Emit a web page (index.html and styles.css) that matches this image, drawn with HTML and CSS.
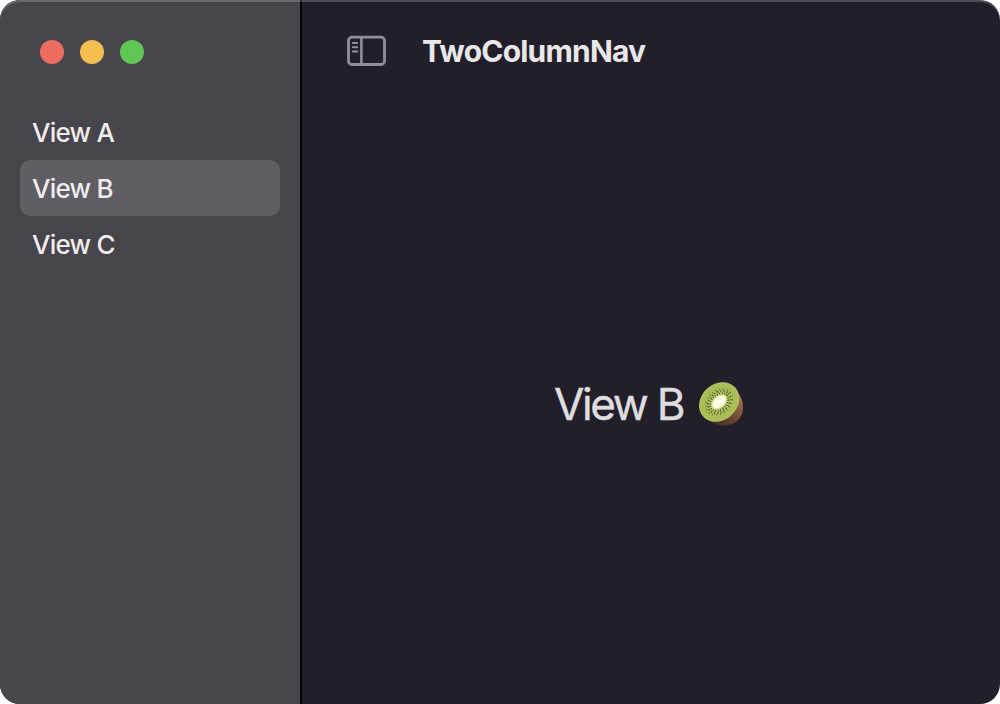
FILE: index.html
```html
<!DOCTYPE html>
<html lang="en">
<head>
<meta charset="utf-8">
<title>TwoColumnNav</title>
<link rel="stylesheet" href="styles.css">
</head>
<body>
<div class="window">
  <aside class="sidebar">
    <div class="controls">
      <span class="dot close"></span>
      <span class="dot minimize"></span>
      <span class="dot zoom"></span>
    </div>
    <nav class="list">
      <div class="item"><span>View A</span></div>
      <div class="item selected"><span>View B</span></div>
      <div class="item"><span>View C</span></div>
    </nav>
  </aside>
  <main class="detail">
    <header class="toolbar">
      <svg class="toggle" viewBox="0 0 40 32" fill="none" stroke="#928f97">
        <rect x="4.3" y="2.3" width="36" height="27.4" rx="3.6" stroke-width="2.8" transform="translate(-1.8 -.2)"/>
        <path d="M15.4 2.5V29.5" stroke-width="2.6"/>
        <path d="M6.8 8h4.4M6.8 12.2h4.4M6.8 16.4h4.4" stroke-width="2" stroke-linecap="round"/>
      </svg>
      <h1 class="title">TwoColumnNav</h1>
    </header>
    <div class="content">
      <span class="label">View B</span>
      <svg class="kiwi" viewBox="27 31 132 132">
        <defs>
          <linearGradient id="skin" x1="0.9" y1="0.2" x2="0.4" y2="1">
            <stop offset="0" stop-color="#a1764f"/>
            <stop offset="0.5" stop-color="#7a5137"/>
            <stop offset="1" stop-color="#4c3024"/>
          </linearGradient>
          <radialGradient id="flesh">
            <stop offset="0" stop-color="#e8efaa"/>
            <stop offset="0.35" stop-color="#c0cf70"/>
            <stop offset="0.65" stop-color="#a9bc53"/>
            <stop offset="0.9" stop-color="#a9bf55"/>
            <stop offset="1" stop-color="#bac268"/>
          </radialGradient>
          <radialGradient id="core">
            <stop offset="0" stop-color="#ffffef"/>
            <stop offset="0.7" stop-color="#fbfbdc"/>
            <stop offset="1" stop-color="#dce59a" stop-opacity="0"/>
          </radialGradient>
        </defs>
        <path fill="url(#skin)" d="M48 138C62 154 84 163 108 161C139 158 159 137 159 108C159 84 149 66 134 52L80 90Z"/>
        <g transform="translate(87.5 91) rotate(-42)">
          <ellipse rx="65" ry="54" fill="url(#flesh)"/>
          <ellipse rx="31" ry="22" fill="none" stroke="#39472a" stroke-width="6" stroke-dasharray="2.5 5"/>
          <ellipse rx="38" ry="28" fill="none" stroke="#39472a" stroke-width="5" stroke-dasharray="3 6.5"/>
          <ellipse rx="44" ry="33" fill="none" stroke="#43532e" stroke-width="4" stroke-dasharray="2.5 9"/>
          <ellipse rx="30" ry="19" fill="url(#core)"/>
        </g>
      </svg>
    </div>
  </main>
</div>
</body>
</html>
```
FILE: styles.css
```css
body {
  margin: 0;
  background: #fff;
  font-family: Inter, "Liberation Sans", sans-serif;
}
.window {
  position: relative;
  display: flex;
  height: 704px;
  border-radius: 20px;
  overflow: hidden;
  background: #231f2a;
}
.window::after {
  content: "";
  position: absolute;
  inset: 0;
  border-radius: 20px;
  box-shadow: inset 0 2px 0 rgba(255, 255, 255, 0.2);
  pointer-events: none;
}
.sidebar {
  box-sizing: border-box;
  width: 302px;
  padding: 40px 20px 0;
  background: #48444b;
  border-right: 2px solid #000;
}
.controls {
  display: flex;
  gap: 16px;
  padding-left: 20px;
}
.dot {
  width: 24px;
  height: 24px;
  border-radius: 50%;
}
.close { background: #ed6b60; }
.minimize { background: #f5be50; }
.zoom { background: #62c655; }
.list { margin-top: 40px; }
.item {
  height: 56px;
  padding-left: 12px;
  border-radius: 10px;
  color: #efedee;
  font-size: 26px;
  font-weight: 450;
  line-height: 57px;
  letter-spacing: -0.75px;
}
.selected { background: #605d64; }
.detail {
  flex: 1;
  display: flex;
  flex-direction: column;
}
.toolbar {
  display: flex;
  align-items: center;
  height: 104px;
  box-sizing: border-box;
  padding: 0 0 2px 44px;
}
.toggle {
  width: 40px;
  height: 32px;
}
.title {
  margin: 0 0 0 36px;
  color: #e9e8e9;
  font-size: 30px;
  font-weight: 650;
  line-height: 40px;
  letter-spacing: -0.8px;
}
.content {
  flex: 1;
  display: flex;
  align-items: center;
  justify-content: center;
  gap: 16px;
  padding-right: 5px;
}
.label {
  color: #dedddf;
  font-size: 44px;
  font-weight: 400;
  line-height: 52px;
  letter-spacing: -2.3px;
  -webkit-text-stroke: 0.4px #dedddf;
}
.kiwi {
  width: 44px;
  height: 44px;
}
```
